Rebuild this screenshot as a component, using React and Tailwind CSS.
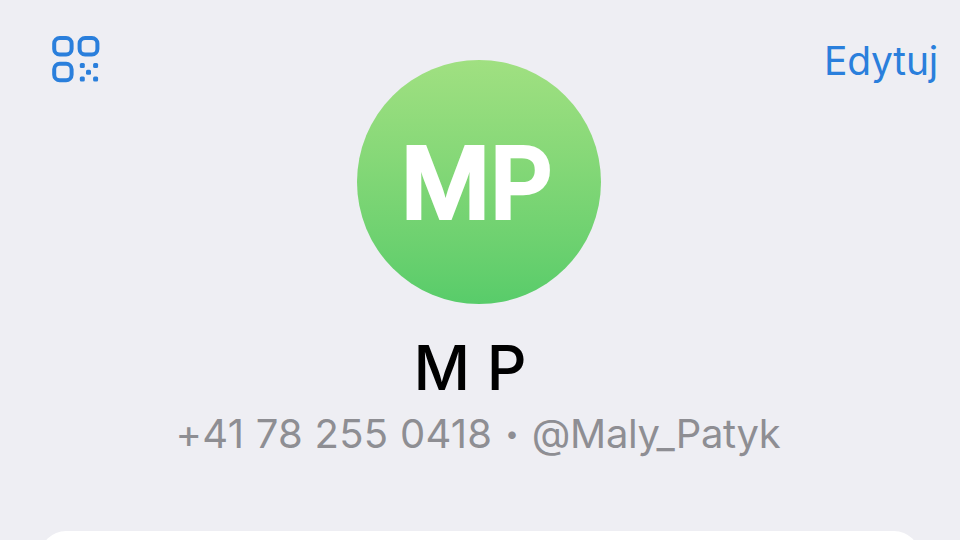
export default function App() {
  return (
    <div className="w-[960px] h-[540px] overflow-hidden bg-[#eeeef3] flex flex-col items-center" style={{ fontFamily: "Inter, 'Liberation Sans', sans-serif" }}>
      <div className="w-full grid grid-cols-[1fr_244px_1fr] pt-[36px] pl-[21px] pr-[23px]">
        <svg width="50" height="48" viewBox="0 0 50 48" fill="none" className="ml-[30px]">
          <rect x="3.2" y="2" width="17.4" height="16.4" rx="5.5" stroke="#2a7fdc" strokeWidth="4" />
          <rect x="28.6" y="2" width="17.8" height="16.4" rx="5.5" stroke="#2a7fdc" strokeWidth="4" />
          <rect x="3.2" y="27.7" width="17.4" height="16.6" rx="5.5" stroke="#2a7fdc" strokeWidth="4" />
          <rect x="28.8" y="27" width="5" height="5" rx="1.5" fill="#2a7fdc" />
          <rect x="42.1" y="27" width="5" height="5" rx="1.5" fill="#2a7fdc" />
          <rect x="35" y="33.7" width="5" height="5" rx="1.5" fill="#2a7fdc" />
          <rect x="28.8" y="40.4" width="5" height="5" rx="1.5" fill="#2a7fdc" />
          <rect x="42.1" y="40.4" width="5" height="5" rx="1.5" fill="#2a7fdc" />
        </svg>
        <div className="mt-[24px] w-[244px] h-[244px] rounded-full bg-gradient-to-b from-[#a0e081] to-[#58cc6a] flex items-center justify-center">
          <span className="text-white font-medium text-[98px] leading-none tracking-[-0.5px] mr-[5px] mt-[1px] [-webkit-text-stroke:4px_white] [stroke-linejoin:round]">MP</span>
        </div>
        <div className="text-right text-[#2a7fdc] text-[39px] leading-[50px] tracking-[-0.2px] mr-[-1px]">Edytuj</div>
      </div>
      <div className="mt-[26px] mr-[20px] text-black text-[62px] leading-[76px] font-medium">M P</div>
      <div className="mt-[2px] mr-[4px] text-[#8e8e93] text-[40px] leading-[52px] flex items-center">
        <span className="tracking-[0.27px]">+41 78 255 0418</span>
        <span className="text-[24px] mx-[13px]">•</span>
        <span className="tracking-[-0.36px]">@Maly_Patyk</span>
      </div>
      <div className="mt-[71px] w-[880px] h-[120px] shrink-0 bg-white rounded-[26px]" />
    </div>
  );
}
